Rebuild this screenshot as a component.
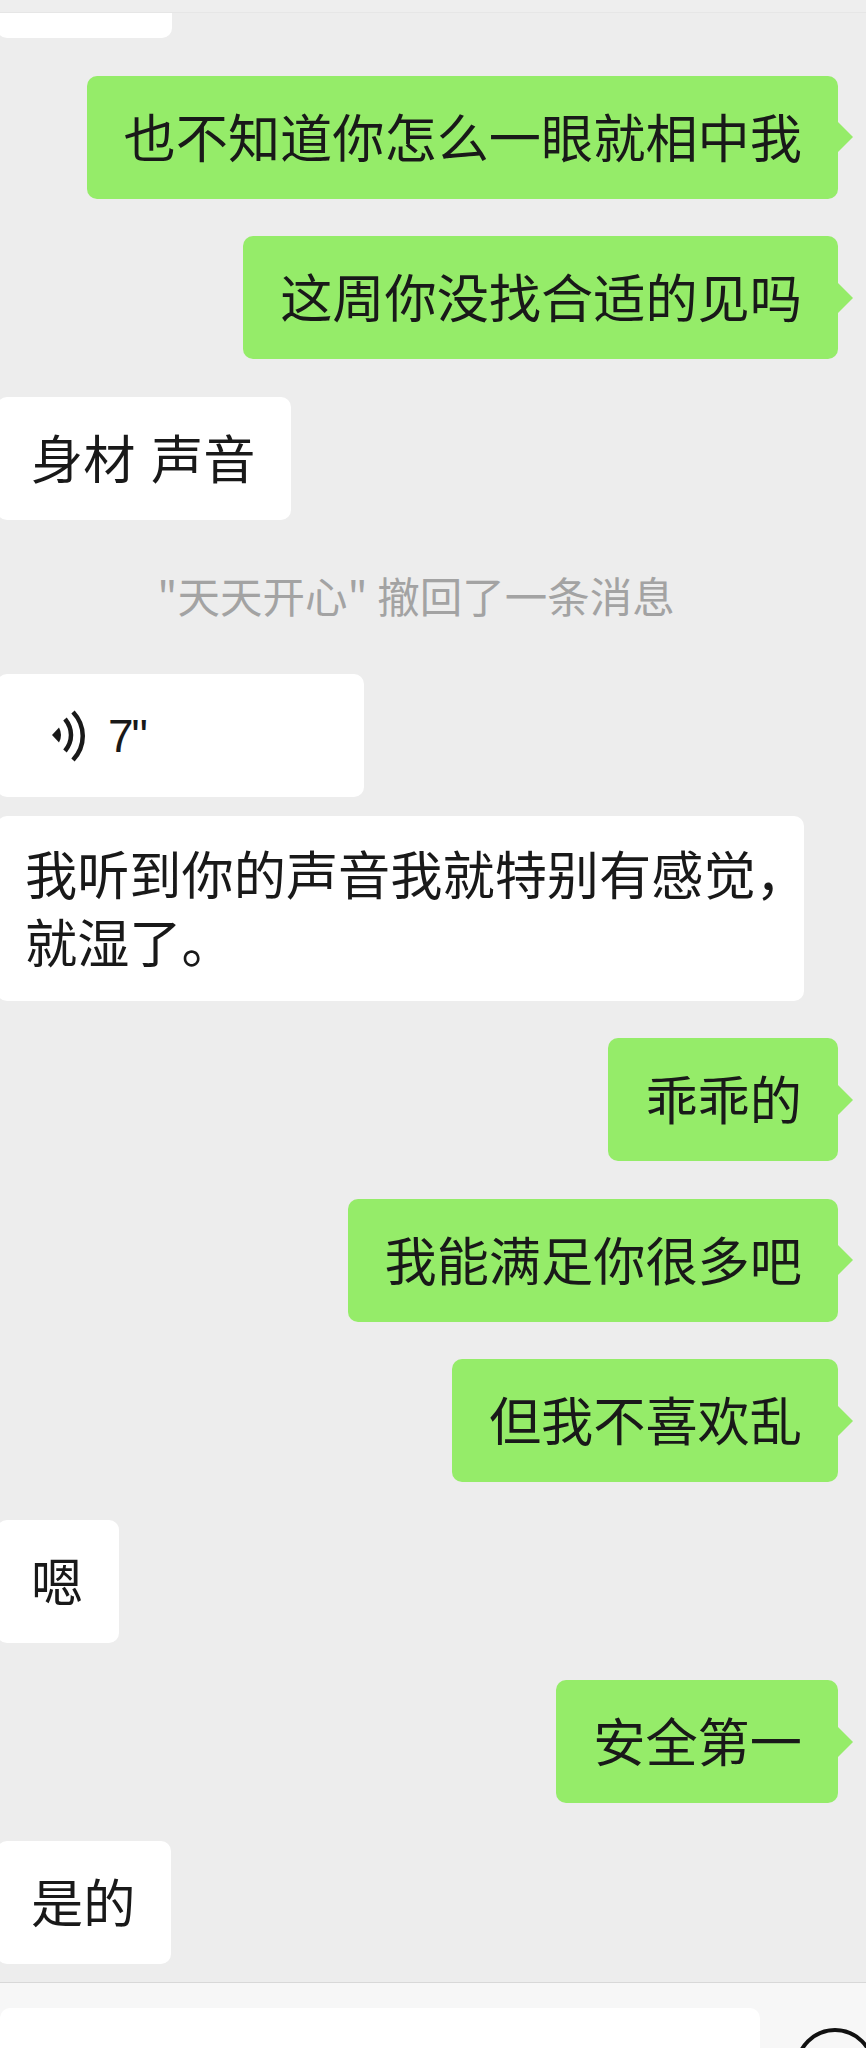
<div class="chat">
  <div class="top-bar"></div>
  <div class="cut-bubble"></div>

  <div class="msg mine"><span>也不知道你怎么一眼就相中我</span></div>
  <div class="msg mine"><span>这周你没找合适的见吗</span></div>
  <div class="msg theirs"><span>身材 声音</span></div>

  <div class="notice">"天天开心" 撤回了一条消息</div>

  <div class="msg theirs voice">
    <svg width="36" height="52" viewBox="0 0 36 52" aria-hidden="true">
      <path d="M0 25 L7 17.5 Q11 25 7 32.5 Z" fill="#191919" />
      <path d="M13 9 C21 19 21 31 13 41" fill="none" stroke="#191919" stroke-width="4.5" />
      <path d="M21 2 C34 16 34 36 21 50" fill="none" stroke="#191919" stroke-width="4.5" />
    </svg>
    <span class="secs">7"</span>
  </div>
  <div class="msg theirs long">
    <span>我听到你的声音我就特别有感觉，就湿了。</span>
  </div>

  <div class="msg mine"><span>乖乖的</span></div>
  <div class="msg mine"><span>我能满足你很多吧</span></div>
  <div class="msg mine"><span>但我不喜欢乱</span></div>
  <div class="msg theirs"><span>嗯</span></div>
  <div class="msg mine"><span>安全第一</span></div>
  <div class="msg theirs"><span>是的</span></div>

  <div class="footer">
    <div class="input"></div>
    <div class="round"></div>
  </div>
</div>

<style>
  :global(body) {
    margin: 0;
    background: #ededed;
  }

  .chat {
    width: 866px;
    height: 2048px;
    overflow: hidden;
    display: flex;
    flex-direction: column;
    background: #ededed;
    font-family: "Noto Sans CJK SC", "Liberation Sans", sans-serif;
    color: #191919;
  }

  .top-bar {
    height: 12px;
    background: #eeeeee;
    border-bottom: 1px solid #e6e6e6;
    flex-shrink: 0;
  }

  .cut-bubble {
    width: 175px;
    height: 25px;
    margin-left: -3px;
    background: #fff;
    border-radius: 0 0 10px 10px;
    flex-shrink: 0;
  }

  .msg {
    position: relative;
    box-sizing: border-box;
    min-height: 123px;
    display: flex;
    align-items: center;
    padding: 0 36px 5px 37px;
    margin-top: 37.5px;
    font-size: 52.2px;
    line-height: 68px;
    word-spacing: 4px;
    border-radius: 10px;
    flex-shrink: 0;
  }

  .mine {
    align-self: flex-end;
    margin-right: 28px;
    background: #95ec69;
  }

  .mine::after {
    content: "";
    position: absolute;
    right: -15px;
    top: 50%;
    width: 0;
    height: 0;
    margin-top: -15px;
    border-left: 15px solid #95ec69;
    border-top: 15px solid transparent;
    border-bottom: 15px solid transparent;
  }

  .theirs {
    align-self: flex-start;
    margin-left: -3px;
    padding-left: 34px;
    background: #fff;
  }

  .notice {
    margin-top: 45px;
    margin-bottom: 11.5px;
    margin-right: 34px;
    text-align: center;
    font-size: 42.5px;
    line-height: 60px;
    color: #a3a3a3;
    flex-shrink: 0;
  }

  .voice {
    width: 367px;
    padding: 2px 0 0 55px;
    gap: 20px;
  }

  .secs {
    font-family: "Liberation Sans", sans-serif;
    font-size: 46px;
    letter-spacing: -2px;
  }

  .long {
    width: 807px;
    min-height: 185px;
    margin-top: 19px;
    padding: 0 0 4px 28px;
  }

  .long span {
    margin-right: -10px;
  }

  .footer {
    margin-top: 18px;
    flex: 1;
    display: flex;
    gap: 35px;
    background: #f7f7f7;
    border-top: 1px solid #d8d8d8;
    padding-top: 25px;
  }

  .input {
    width: 760px;
    height: 80px;
    background: #fff;
    border-radius: 10px;
    flex-shrink: 0;
  }

  .round {
    width: 80px;
    height: 80px;
    margin-top: 20px;
    box-sizing: border-box;
    border: 4px solid #111;
    border-radius: 50%;
    flex-shrink: 0;
  }
</style>
